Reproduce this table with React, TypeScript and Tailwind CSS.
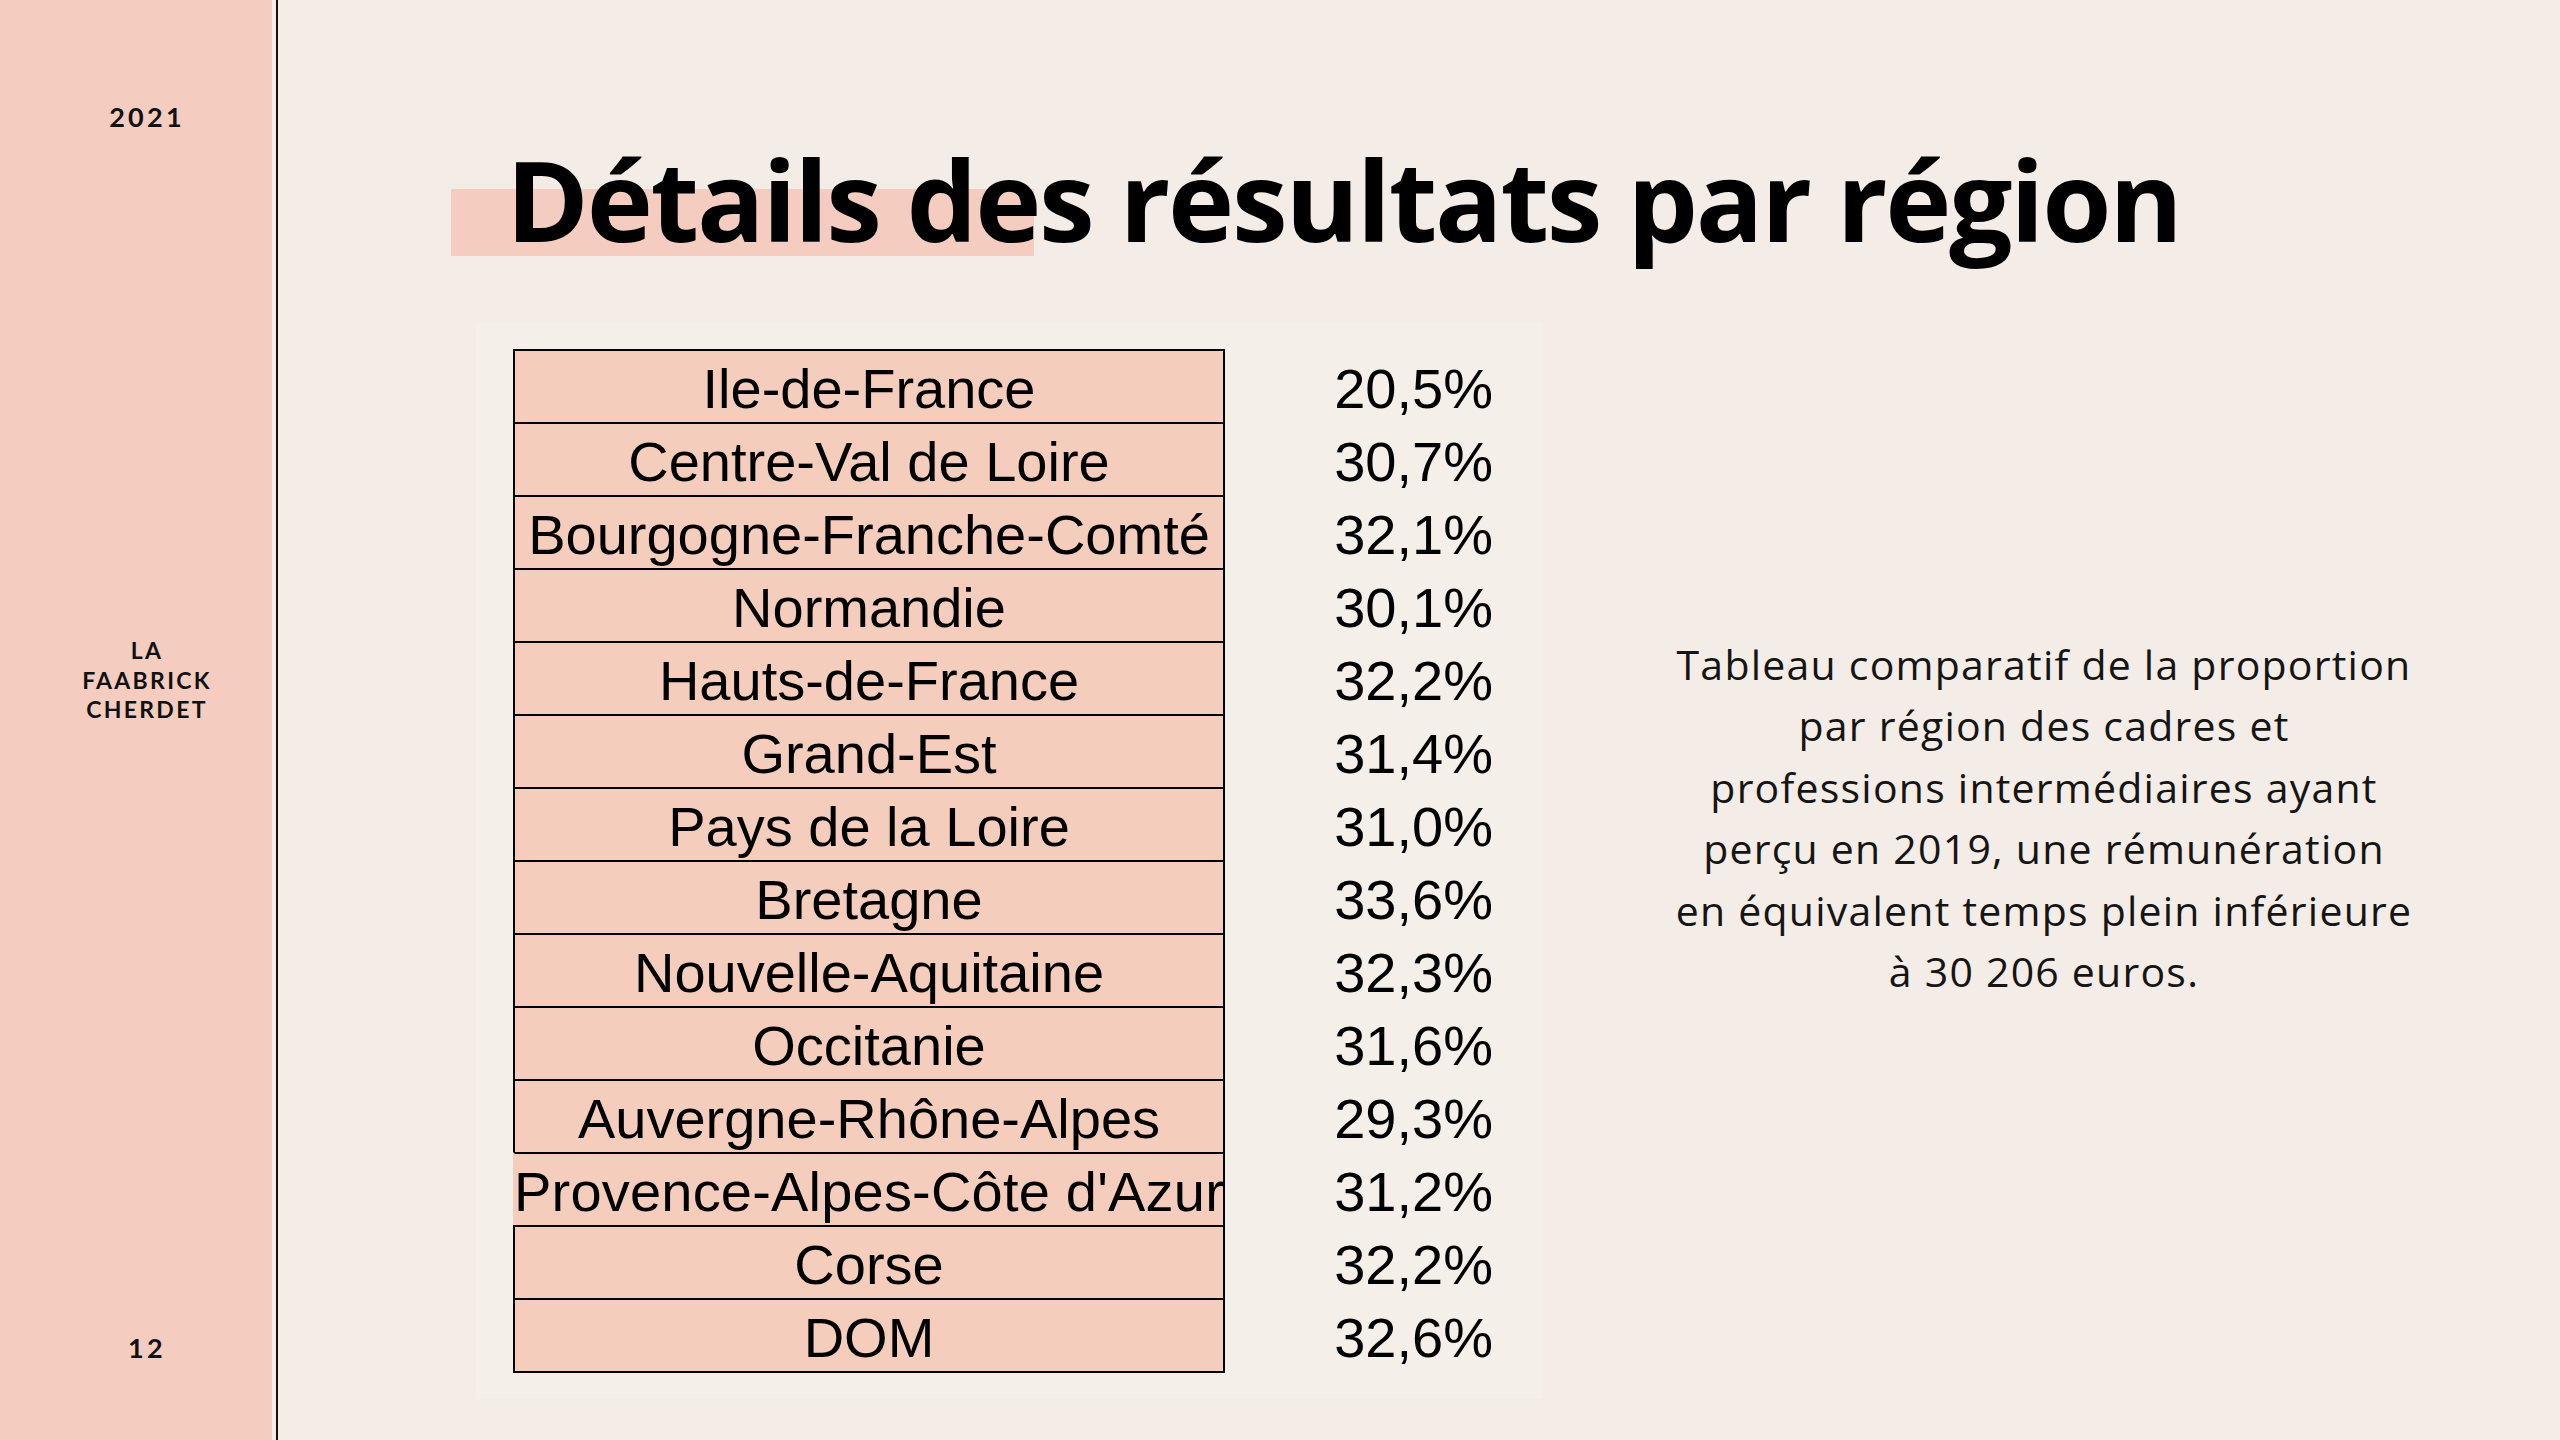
const REGIONS = [
  { name: "Ile-de-France", pct: "20,5%" },
  { name: "Centre-Val de Loire", pct: "30,7%" },
  { name: "Bourgogne-Franche-Comté", pct: "32,1%" },
  { name: "Normandie", pct: "30,1%" },
  { name: "Hauts-de-France", pct: "32,2%" },
  { name: "Grand-Est", pct: "31,4%" },
  { name: "Pays de la Loire", pct: "31,0%" },
  { name: "Bretagne", pct: "33,6%" },
  { name: "Nouvelle-Aquitaine", pct: "32,3%" },
  { name: "Occitanie", pct: "31,6%" },
  { name: "Auvergne-Rhône-Alpes", pct: "29,3%" },
  { name: "Provence-Alpes-Côte d'Azur", pct: "31,2%", overflow: true },
  { name: "Corse", pct: "32,2%" },
  { name: "DOM", pct: "32,6%" },
];

function Sidebar() {
  return (
    <aside className="w-[272px] shrink-0 bg-[#f4cdc0] text-[#111] font-['Lato',sans-serif] font-bold flex flex-col items-center pl-[22px]">
      <div className="mt-[103px] text-[27px] leading-none tracking-[0.12em]">2021</div>
      <div className="mt-[506px] text-[23px] leading-[29.5px] tracking-[0.1em] text-center">
        LA
        <br />
        FAABRICK
        <br />
        CHERDET
      </div>
      <div className="mt-[609px] text-[27px] leading-none tracking-[0.12em]">12</div>
    </aside>
  );
}

function RegionTable() {
  return (
    <div className="mt-[67px] ml-[198px] w-[1067px] shrink-0 bg-[#f5efea] pl-[37px] pt-[27px] pb-[26px] font-['Liberation_Sans',Arial,sans-serif] text-[56px] text-black">
      {REGIONS.map((r, i) => (
        <div key={r.name} className="flex">
          <div
            className={
              "w-[712px] h-[73px] border-t-2 border-r-2 border-black bg-[#f5cdbc] overflow-hidden flex justify-center pt-[2px] leading-[71px] whitespace-nowrap " +
              (r.overflow ? "border-l-2 border-l-[#f5cdbc] tracking-[0.2px] " : "border-l-2 ") +
              (i === REGIONS.length - 1 ? "border-b-2 h-[75px]" : "")
            }
          >
            {r.name}
          </div>
          <div className="w-[268px] h-[73px] pt-[4px] leading-[71px] text-right">{r.pct}</div>
        </div>
      ))}
    </div>
  );
}

export default function App() {
  return (
    <div className="w-[2560px] h-[1440px] flex bg-[#f4ece6] overflow-hidden">
      <Sidebar />
      <main className="ml-[4px] flex-1 border-l-2 border-[#111] flex flex-col">
        <header className="relative pt-[143px] pl-[228px]">
          <div className="absolute left-[173px] top-[189px] w-[583px] h-[67px] bg-[#f4cdc0]" />
          <h1 className="relative font-['Open_Sans',sans-serif] font-bold text-[112px] leading-none tracking-[-0.02em] text-black whitespace-nowrap">
            Détails des résultats par région
          </h1>
        </header>
        <div className="flex">
          <RegionTable />
          <p className="flex-1 pt-[379px] pr-[15px] text-center font-['Open_Sans',sans-serif] font-medium text-[41px] leading-[61.4px] tracking-[0.03em] text-[#151515]">
            Tableau comparatif de la proportion
            <br />
            par région des cadres et
            <br />
            professions intermédiaires ayant
            <br />
            perçu en 2019, une rémunération
            <br />
            en équivalent temps plein inférieure
            <br />
            à 30 206 euros.
          </p>
        </div>
      </main>
    </div>
  );
}
